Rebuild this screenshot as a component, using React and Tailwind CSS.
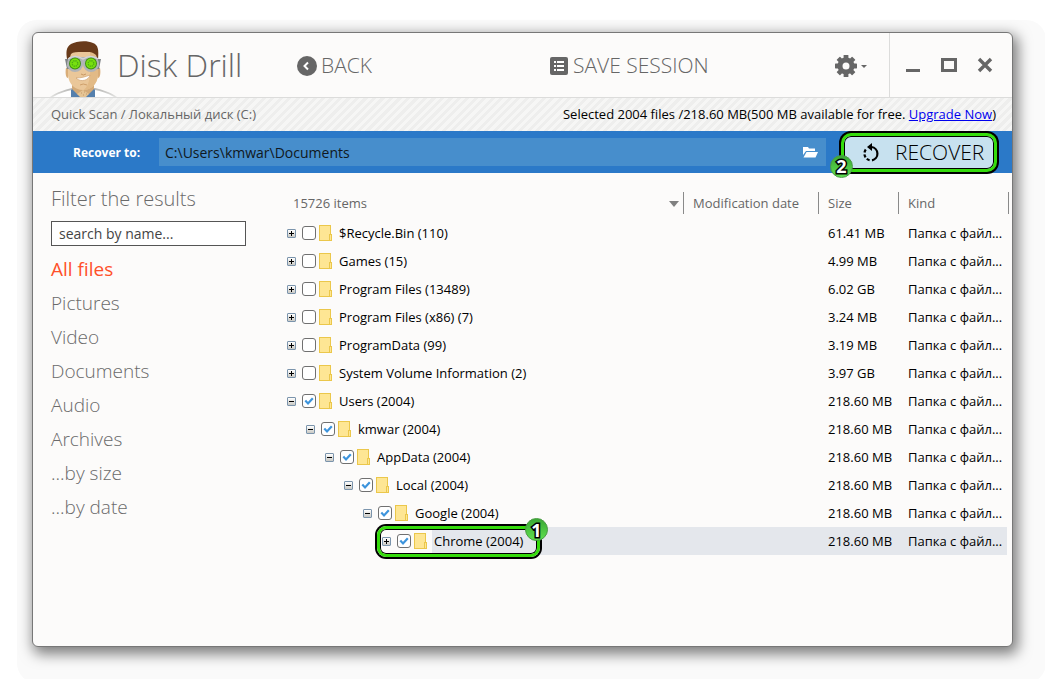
import { useState } from "react";

const filters = [
  "All files",
  "Pictures",
  "Video",
  "Documents",
  "Audio",
  "Archives",
  "...by size",
  "...by date",
];

const rows = [
  { name: "$Recycle.Bin (110)", size: "61.41 MB", level: 0 },
  { name: "Games (15)", size: "4.99 MB", level: 0 },
  { name: "Program Files (13489)", size: "6.02 GB", level: 0 },
  { name: "Program Files (x86) (7)", size: "3.24 MB", level: 0 },
  { name: "ProgramData (99)", size: "3.19 MB", level: 0 },
  { name: "System Volume Information (2)", size: "3.97 GB", level: 0 },
  { name: "Users (2004)", size: "218.60 MB", level: 0, open: true, checked: true },
  { name: "kmwar (2004)", size: "218.60 MB", level: 1, open: true, checked: true },
  { name: "AppData (2004)", size: "218.60 MB", level: 2, open: true, checked: true },
  { name: "Local (2004)", size: "218.60 MB", level: 3, open: true, checked: true },
  { name: "Google (2004)", size: "218.60 MB", level: 4, open: true, checked: true },
  { name: "Chrome (2004)", size: "218.60 MB", level: 5, checked: true, selected: true },
];

const indent = ["pl-0", "pl-[19px]", "pl-[38px]", "pl-[57px]", "pl-[76px]", "pl-[95px]"];

function Doctor() {
  return (
    <svg width="67" height="57" viewBox="0 0 67 57" aria-hidden="true">
      <defs>
        <linearGradient id="coat" x1="0" y1="0" x2="0" y2="1">
          <stop offset="0" stopColor="#b5b5b3" />
          <stop offset="1" stopColor="#e4e4e2" />
        </linearGradient>
      </defs>
      <path d="M0 57 C7 52 14 50 22 48 H45 C53 50 60 52 67 57 Z" fill="url(#coat)" />
      <path d="M3 57 C10 53 16 51 22 50 V57 Z M64 57 C57 53 51 51 45 50 V57 Z" fill="#fff" />
      <path d="M21 50 L24 48 H43 L45 50 V57 H21 Z" fill="#5580ad" />
      <path d="M22 40 H44 V49 L39 54 L33 57 L27 54 L22 49 Z" fill="#d3aa78" />
      <path d="M27 54 L33 50 L39 54 L36 57 H30 Z" fill="#e5c494" />
      <path d="M31 53h1M34 52h1M33 55h1M36 54h1" stroke="#c4986a" />
      <path d="M17 12 H48 L48 36 C47 43 42 50 33 50 C24 50 19 43 18 36 Z" fill="#eac799" />
      <path d="M40 12 H48 V36 C47 43 42 50 34 50 C40 44 41 36 40 12 Z" fill="#e2ba86" />
      <path d="M16 28 h2 v10 c-2 0 -3 -5 -2 -10 Z M50 28 h-2 v10 c2 0 3 -5 2 -10 Z" fill="#d9ad78" />
      <path d="M17 19 C16 12 16 7 21 4 C26 1 37 0 43 3 C48 5 49 9 48 20 L46 15 C42 11 38 12 32 12 C27 12 23 12 21 14 L19 20 Z" fill="#683a1a" />
      <path d="M15 19 h4 v10 h-2 z M51 19 h-4 v10 h2 z" fill="#7f8387" />
      <path d="M19 17 H47 L49 26 L42 31 L36 29 L33 25 L30 29 L24 31 L17 26 Z" fill="#b4b7ba" />
      <circle cx="25" cy="24" r="8" fill="#b0b3b6" />
      <circle cx="41" cy="24" r="8" fill="#b0b3b6" />
      <path d="M18 19 Q25 14 33 19 Q41 14 48 19" fill="none" stroke="#d5d7d8" strokeWidth="1.4" />
      <circle cx="25" cy="23.5" r="6" fill="#3f9012" />
      <circle cx="41" cy="23.5" r="6" fill="#3f9012" />
      <circle cx="25" cy="23.5" r="5" fill="#78e010" />
      <circle cx="41" cy="23.5" r="5" fill="#78e010" />
      <circle cx="25" cy="23.5" r="2.8" fill="none" stroke="#4fae14" strokeWidth="1.4" strokeDasharray="1.4 0.8" />
      <circle cx="41" cy="23.5" r="2.8" fill="none" stroke="#4fae14" strokeWidth="1.4" strokeDasharray="1.4 0.8" />
      <path d="M31 34 Q33 36 36 34" fill="none" stroke="#c99863" />
      <path d="M26 38 C31 38 35 37 40 35 C39 40 31 43 26 38 Z" fill="#fff" stroke="#c99863" strokeWidth="0.6" />
      <path d="M30 45 Q33 43 37 45" fill="none" stroke="#cfa06b" />
    </svg>
  );
}

function Gear() {
  return (
    <svg width="22" height="22" viewBox="-11 -11 22 22" fill="#666" aria-hidden="true">
      <circle r="6" fill="none" stroke="#666" strokeWidth="5" />
      {[0, 45, 90, 135, 180, 225, 270, 315].map((a) => (
        <rect key={a} x="-2.4" y="-11" width="4.8" height="4" rx="0.6" transform={`rotate(${a})`} />
      ))}
    </svg>
  );
}

function Folder() {
  return (
    <svg width="13" height="16" viewBox="0 0 13 16" className="ml-[3px] shrink-0" aria-hidden="true">
      <rect x="0.5" y="0.5" width="11" height="15" fill="#fee694" stroke="#ebc74b" />
      <rect x="10.5" y="9.5" width="2" height="6" fill="#fee694" stroke="#ebc74b" />
    </svg>
  );
}

function Badge({ children, className }) {
  return (
    <span
      className={`absolute flex size-[23px] items-center justify-center rounded-full border border-[#4b9a45] bg-linear-to-b from-[#3aa935] to-[#5fe04f] text-[18px] leading-6 font-bold text-white [paint-order:stroke_fill] [-webkit-text-stroke:3px_#000] ${className}`}
    >
      {children}
    </span>
  );
}

function TreeRow({ row }) {
  const [checked, setChecked] = useState(!!row.checked);
  const fill = row.selected ? "bg-[#e4e7ec]" : "";

  return (
    <tr className="h-7">
      <td className={`p-0 ${indent[row.level]}`}>
        <div className="relative flex h-7 items-center">
          <button
            type="button"
            aria-label={row.open ? "Collapse" : "Expand"}
            className="size-[9px] shrink-0 rounded-[1px] border border-[#7b94ac] bg-linear-to-b from-white to-[#c9c9c4]"
          >
            <svg width="7" height="7" viewBox="0 0 7 7" className="block" aria-hidden="true">
              <path d={row.open ? "M1 3.5H6" : "M1 3.5H6M3.5 1V6"} stroke="#000" />
            </svg>
          </button>
          <label className="flex h-7 flex-1 items-center whitespace-nowrap">
            <span className="relative ml-[6px] size-[14px] shrink-0">
              <input
                type="checkbox"
                checked={checked}
                onChange={() => setChecked(!checked)}
                className="block size-[14px] appearance-none rounded-[3px] border border-[#707070] bg-white"
              />
              {checked && (
                <svg width="14" height="14" viewBox="0 0 14 14" className="pointer-events-none absolute inset-0" aria-hidden="true">
                  <path d="M3.3 6.6 L6 9.4 L10.8 4.2" fill="none" stroke="#3d94dc" strokeWidth="2.2" />
                </svg>
              )}
            </span>
            <Folder />
            <span className={`ml-[5px] flex h-7 flex-1 items-center pt-0.5 pl-[2px] ${fill}`}>{row.name}</span>
          </label>
          {row.selected && (
            <span className="pointer-events-none absolute -top-px -left-[5px] h-[31px] w-[163px] rounded-[9px] border-3 border-[#35dc0c] shadow-[0_0_0_2px_#000,inset_0_0_0_1px_#000]">
              <Badge className="-top-[11px] -right-[11px]">1</Badge>
            </span>
          )}
        </div>
      </td>
      <td className={`p-0 ${fill}`} />
      <td className="p-0">
        <div className={`flex h-7 items-center pt-0.5 pl-[9px] whitespace-nowrap ${fill}`}>{row.size}</div>
      </td>
      <td className="p-0">
        <div className={`mr-[2px] flex h-7 items-center pt-0.5 pl-[9px] whitespace-nowrap ${fill}`}>Папка с файл...</div>
      </td>
    </tr>
  );
}

function HeadCell({ children, first }) {
  return (
    <th className="p-0 text-left font-normal">
      <div className={`flex h-[22px] items-center border-r border-[#8a8a8a] pt-0.5 ${first ? "pl-[6px]" : "pl-[9px]"}`}>
        {children}
      </div>
    </th>
  );
}

export default function App() {
  const [active, setActive] = useState("All files");

  return (
    <div className="flex min-h-screen bg-white p-8 font-['Open_Sans','Noto_Sans',sans-serif] text-[13px] text-black">
      <div className="flex flex-1 flex-col rounded-[6px] border border-[#777] bg-[#fcfbfa] shadow-[3px_5px_14px_2px_rgba(0,0,0,0.5),9px_12px_0_24px_#fafafa]">

        {/* Title bar */}
        <header className="grid h-[65px] grid-cols-[264px_252fr_286fr_54px_123px] border-b border-[#dcdcdb] text-[#666]">
          <div className="flex items-end pl-[17px]">
            <Doctor />
            <h1 className="self-center text-[32px] leading-none font-light">Disk Drill</h1>
          </div>
          <button type="button" className="flex items-center gap-1 pt-0.5 text-[21px] font-light">
            <svg width="20" height="20" viewBox="0 0 20 20" aria-hidden="true">
              <circle cx="10" cy="10" r="10" fill="#666" />
              <path d="M11 6.5 L7.5 10 L11 13.5" fill="none" stroke="#fff" strokeWidth="2" />
            </svg>
            BACK
          </button>
          <button type="button" className="flex items-center gap-[5px] pt-0.5 pl-px text-[21px] font-light">
            <svg width="18" height="18" viewBox="0 0 18 18" aria-hidden="true">
              <rect width="18" height="18" rx="2" fill="#666" />
              <path d="M4 5H6M7 5H14M4 9H6M7 9H14M4 13H6M7 13H14" stroke="#fff" strokeWidth="2" />
            </svg>
            SAVE SESSION
          </button>
          <button type="button" aria-label="Settings" className="flex items-center gap-1 pt-0.5">
            <Gear />
            <svg width="6" height="3" viewBox="0 0 6 3" aria-hidden="true">
              <path d="M0 0H6L3 3Z" fill="#666" />
            </svg>
          </button>
          <div className="flex items-center gap-5 border-l border-[#dcdcdb] pl-4">
            <button type="button" aria-label="Minimize">
              <svg width="15" height="16" viewBox="0 0 15 16"><path d="M0 13.5H14" stroke="#666" strokeWidth="3" /></svg>
            </button>
            <button type="button" aria-label="Maximize">
              <svg width="16" height="16" viewBox="0 0 16 16"><rect x="1.5" y="2.5" width="13" height="11" fill="none" stroke="#666" strokeWidth="3" /></svg>
            </button>
            <button type="button" aria-label="Close">
              <svg width="16" height="16" viewBox="0 0 16 16"><path d="M2 2L14 14M14 2L2 14" stroke="#666" strokeWidth="3.4" /></svg>
            </button>
          </div>
        </header>

        {/* Scan info */}
        <div className="flex h-[33px] items-center justify-between bg-[repeating-linear-gradient(135deg,#eeeeed_0px,#eeeeed_3px,#f6f6f5_3px,#f6f6f5_6px)] pr-4 pl-[18px]">
          <span className="text-[#666]">Quick Scan / Локальный диск (C:)</span>
          <span>
            Selected 2004 files /218.60 MB(500 MB available for free.{" "}
            <a href="#upgrade" className="text-[#0000ee] underline">Upgrade Now</a>)
          </span>
        </div>

        {/* Destination */}
        <div className="flex h-[42px] items-center bg-[#2b79c8] pr-[15px]">
          <label htmlFor="target" className="w-[126px] pt-0.5 pl-10 text-[12px] font-bold whitespace-nowrap text-white">
            Recover to:
          </label>
          <div className="flex h-7 flex-1 items-center bg-[#478ecc] pr-2 pl-[6px]">
            <input
              id="target"
              type="text"
              defaultValue="C:\Users\kmwar\Documents"
              className="min-w-0 flex-1 bg-transparent text-[14px] text-[#101820] outline-none"
            />
            <button type="button" aria-label="Choose folder">
              <svg width="15" height="12" viewBox="0 0 15 12" fill="#fff" className="block" aria-hidden="true">
                <path d="M0 9 V1 H5 L6 2.5 H12 V5 H3 Z" />
                <path d="M3.5 6 H15 L12.5 11.5 H0.5 Z" />
              </svg>
            </button>
          </div>
          <button
            type="button"
            className="relative ml-[15px] flex h-[39px] w-[156px] items-center gap-[15px] rounded-[10px] border-3 border-[#35dc0c] bg-[#c7e1ef] pt-0.5 pl-[18px] text-[21px] font-light shadow-[0_0_0_2px_#000,inset_0_0_0_1px_#000]"
          >
            <svg width="18" height="20" viewBox="0 0 18 20" aria-hidden="true">
              <path d="M9.5 4 A6.8 6.8 0 0 1 10 17.4" fill="none" stroke="#000" strokeWidth="2.2" />
              <path d="M7.6 17.2 A6.8 6.8 0 0 1 4.2 6" fill="none" stroke="#000" strokeWidth="2.2" strokeDasharray="3.2 1.8" />
              <path d="M10 0 V8 L5 4 Z" fill="#000" />
            </svg>
            RECOVER
            <Badge className="-bottom-[9px] -left-[14px]">2</Badge>
          </button>
        </div>

        <div className="flex flex-1">
          {/* Filters */}
          <aside className="w-[254px] shrink-0 pt-3 pl-[18px] text-[#6a6a6a]">
            <h2 className="text-[20px] leading-7 font-light">Filter the results</h2>
            <input
              type="text"
              aria-label="search by name"
              placeholder="search by name..."
              className="mt-2 block h-[25px] w-[195px] border border-[#555] bg-white px-[7px] text-[14px] text-black outline-none placeholder:text-[#444]"
            />
            <nav className="mt-[6px] flex flex-col items-start text-[19px]">
              {filters.map((f) => (
                <button
                  key={f}
                  type="button"
                  onClick={() => setActive(f)}
                  className={`h-[34px] ${f === active ? "text-[#ff5029]" : "font-light"}`}
                >
                  {f}
                </button>
              ))}
            </nav>
          </aside>

          {/* Results */}
          <main className="flex-1 pt-[14px] pr-[3px]">
            <table className="w-full table-fixed border-collapse">
              <colgroup>
                <col />
                <col className="w-[135px]" />
                <col className="w-[80px]" />
                <col className="w-[110px]" />
              </colgroup>
              <thead className="text-[#666]">
                <tr className="h-8">
                  <HeadCell first>
                    15726 items
                    <svg width="10" height="6" viewBox="0 0 10 6" className="mr-1 ml-auto" aria-hidden="true">
                      <path d="M0 0H10L5 6Z" fill="#808080" />
                    </svg>
                  </HeadCell>
                  <HeadCell>Modification date</HeadCell>
                  <HeadCell>Size</HeadCell>
                  <HeadCell>Kind</HeadCell>
                </tr>
              </thead>
              <tbody>
                {rows.map((row) => (
                  <TreeRow key={row.name} row={row} />
                ))}
              </tbody>
            </table>
          </main>
        </div>
      </div>
    </div>
  );
}
